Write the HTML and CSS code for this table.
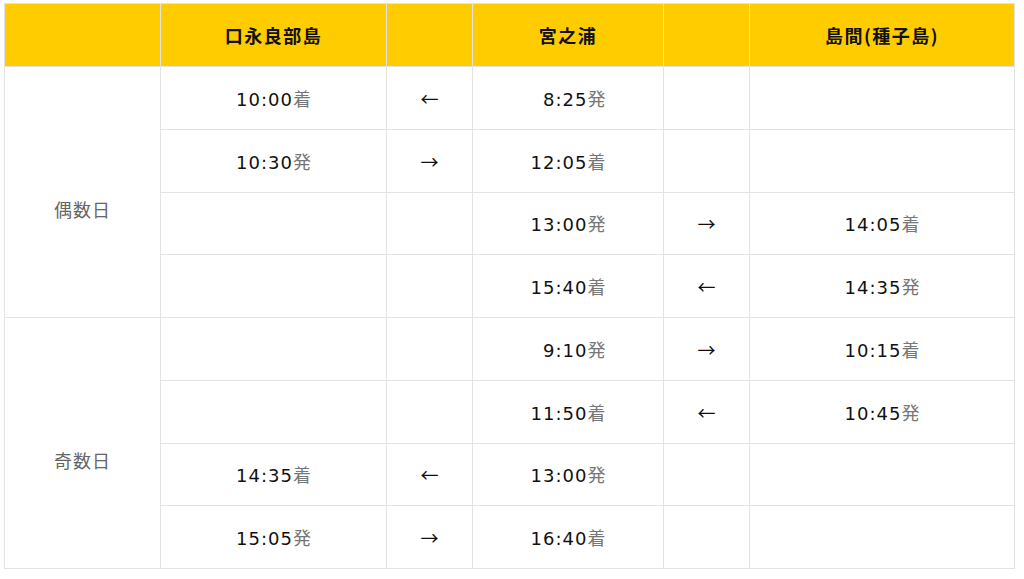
FILE: index.html
```html
<!DOCTYPE html>
<html lang="ja">
<head>
<meta charset="utf-8">
<title>時刻表</title>
<link rel="stylesheet" href="styles.css">
</head>
<body>
<div class="wrap">
<table class="tt">
  <colgroup>
    <col class="c-day">
    <col class="c-kuchi">
    <col class="c-arr">
    <col class="c-miya">
    <col class="c-arr">
    <col class="c-shima">
  </colgroup>
  <thead>
    <tr>
      <th></th>
      <th class="ls">口永良部島</th>
      <th></th>
      <th class="ls">宮之浦</th>
      <th></th>
      <th class="ls">島間(種子島)</th>
    </tr>
  </thead>
  <tbody>
    <tr>
      <td class="day" rowspan="4">偶数日</td>
      <td class="t">10:00<span class="k">着</span></td>
      <td class="arr">←</td>
      <td class="t">&#8199;8:25<span class="k">発</span></td>
      <td></td>
      <td></td>
    </tr>
    <tr>
      <td class="t">10:30<span class="k">発</span></td>
      <td class="arr">→</td>
      <td class="t">12:05<span class="k">着</span></td>
      <td></td>
      <td></td>
    </tr>
    <tr>
      <td></td>
      <td></td>
      <td class="t">13:00<span class="k">発</span></td>
      <td class="arr">→</td>
      <td class="t">14:05<span class="k">着</span></td>
    </tr>
    <tr>
      <td></td>
      <td></td>
      <td class="t">15:40<span class="k">着</span></td>
      <td class="arr">←</td>
      <td class="t">14:35<span class="k">発</span></td>
    </tr>
    <tr>
      <td class="day" rowspan="4">奇数日</td>
      <td></td>
      <td></td>
      <td class="t">&#8199;9:10<span class="k">発</span></td>
      <td class="arr">→</td>
      <td class="t">10:15<span class="k">着</span></td>
    </tr>
    <tr>
      <td></td>
      <td></td>
      <td class="t">11:50<span class="k">着</span></td>
      <td class="arr">←</td>
      <td class="t">10:45<span class="k">発</span></td>
    </tr>
    <tr>
      <td class="t">14:35<span class="k">着</span></td>
      <td class="arr">←</td>
      <td class="t">13:00<span class="k">発</span></td>
      <td></td>
      <td></td>
    </tr>
    <tr>
      <td class="t">15:05<span class="k">発</span></td>
      <td class="arr">→</td>
      <td class="t">16:40<span class="k">着</span></td>
      <td></td>
      <td></td>
    </tr>
  </tbody>
</table>
</div>
</body>
</html>
```
FILE: styles.css
```css
html, body {
  margin: 0;
  padding: 0;
  background: #fff;
}

.wrap {
  padding: 3px 0 0 4px;
}

.tt {
  border-collapse: collapse;
  table-layout: fixed;
  width: 1011px;
  font-family: "DejaVu Sans", "Noto Sans CJK JP", sans-serif;
  color: #222;
}

.c-day { width: 156px; }
.c-kuchi { width: 226px; }
.c-arr { width: 86px; }
.c-miya { width: 191px; }
.c-shima { width: 265px; }

.tt th,
.tt td {
  border: 1px solid #e3e3e3;
  padding: 0;
  height: 61.75px;
  text-align: center;
  vertical-align: middle;
}

.tt th {
  background: #ffcc00;
  font-family: "Noto Sans CJK JP", sans-serif;
  font-weight: bold;
  font-size: 18px;
  color: #111;
  height: 62px;
}

.tt th.ls {
  letter-spacing: 1.5px;
}

.t {
  font-size: 18px;
  letter-spacing: 1px;
  color: #111;
}

.k {
  font-family: "Noto Sans CJK JP", sans-serif;
  color: #777;
  letter-spacing: 0;
}

.arr {
  font-family: "Noto Sans CJK JP", sans-serif;
  font-size: 18px;
  color: #111;
}

.day {
  font-family: "Noto Sans CJK JP", sans-serif;
  font-size: 18px;
  color: #666;
  letter-spacing: 1px;
  padding-top: 34px !important;
}
```
